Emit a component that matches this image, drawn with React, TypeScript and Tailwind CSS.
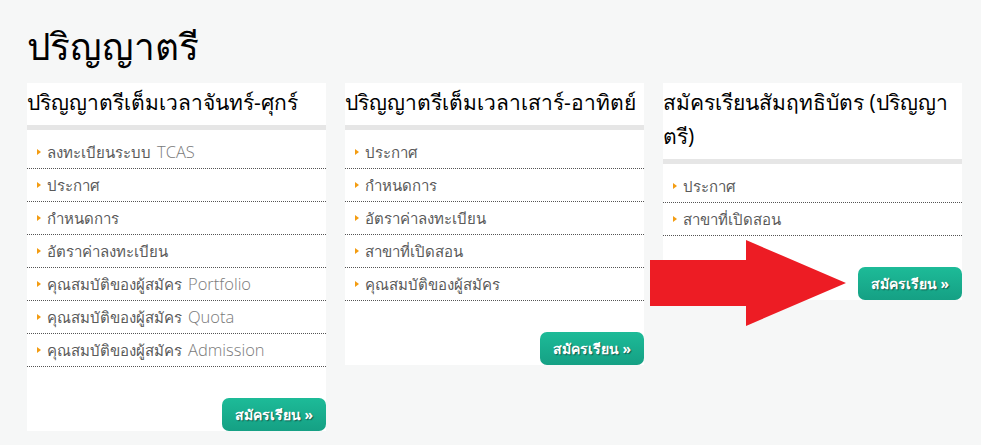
import React from "react";

type Item = { th: string; en?: string };

type Program = {
  title: string;
  items: Item[];
};

const programs: Program[] = [
  {
    title: "ปริญญาตรีเต็มเวลาจันทร์-ศุกร์",
    items: [
      { th: "ลงทะเบียนระบบ", en: "TCAS" },
      { th: "ประกาศ" },
      { th: "กำหนดการ" },
      { th: "อัตราค่าลงทะเบียน" },
      { th: "คุณสมบัติของผู้สมัคร", en: "Portfolio" },
      { th: "คุณสมบัติของผู้สมัคร", en: "Quota" },
      { th: "คุณสมบัติของผู้สมัคร", en: "Admission" },
    ],
  },
  {
    title: "ปริญญาตรีเต็มเวลาเสาร์-อาทิตย์",
    items: [
      { th: "ประกาศ" },
      { th: "กำหนดการ" },
      { th: "อัตราค่าลงทะเบียน" },
      { th: "สาขาที่เปิดสอน" },
      { th: "คุณสมบัติของผู้สมัคร" },
    ],
  },
  {
    title: "สมัครเรียนสัมฤทธิบัตร (ปริญญาตรี)",
    items: [{ th: "ประกาศ" }, { th: "สาขาที่เปิดสอน" }],
  },
];

const ProgramCard: React.FC<{ program: Program }> = ({ program }) => (
  <div className="w-[299px] bg-white">
    {/* Card header */}
    <h3 className="pt-[2px] pb-[6px] pr-2 text-[21px] leading-[34px] text-black">
      {program.title}
    </h3>
    <div className="h-[5px] bg-[#e6e6e6]" />

    {/* Links */}
    <ul className="pt-[6px]">
      {program.items.map((item, i) => (
        <li
          key={i}
          className="flex h-[33px] items-center border-b border-dotted border-[#555] pl-[10px] text-[15px]"
        >
          <span className="mr-[6px] h-0 w-0 border-y-[3px] border-l-[4px] border-y-transparent border-l-[#f39c12]" />
          <span className="text-[#5a5a5a]">{item.th}</span>
          {item.en && (
            <span className="ml-[6px] text-[16.5px] font-light text-[#7a7a7a]">{item.en}</span>
          )}
        </li>
      ))}
    </ul>

    {/* Apply button */}
    <div className="mt-[31px] flex justify-end">
      <button className="h-[33px] w-[104px] rounded-[7px] bg-gradient-to-b from-[#1dbb98] to-[#15a084] text-[14px] font-bold text-white [text-shadow:1px_1px_1px_rgba(0,0,0,0.45)]">
        สมัครเรียน »
      </button>
    </div>
  </div>
);

const App: React.FC = () => {
  return (
    <div
      className="relative h-[445px] w-[981px] overflow-hidden bg-[#f6f7f7] pl-[27px] pt-[22px]"
      style={{ fontFamily: '"Open Sans", "Noto Sans", "DejaVu Sans", Tahoma, sans-serif' }}
    >
      <h1 className="text-[37px] font-medium leading-[48px] text-black">ปริญญาตรี</h1>

      <div className="mt-[13px] flex items-start gap-[19px]">
        {programs.map((p, i) => (
          <ProgramCard key={i} program={p} />
        ))}
      </div>

      {/* Red arrow overlay */}
      <svg
        className="absolute left-[650px] top-[240px]"
        width="196"
        height="86"
        viewBox="0 0 196 86"
      >
        <polygon points="0,20 96,20 96,0 196,43 96,86 96,66 0,66" fill="#ed1c24" />
      </svg>
    </div>
  );
};

export default App;
